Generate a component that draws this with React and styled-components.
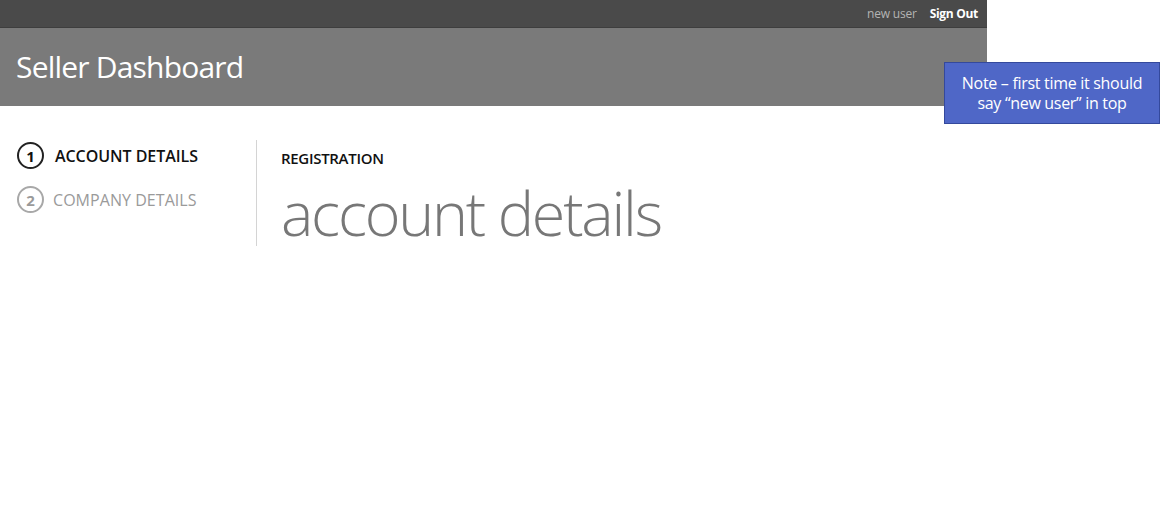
import React from "react";
import styled, { createGlobalStyle } from "styled-components";

const Global = createGlobalStyle`
  html, body { margin: 0; padding: 0; background: #fff; }
  body { font-family: "Open Sans", "Noto Sans", sans-serif; }
`;

const Page = styled.div`
  position: relative;
  width: 1165px;
  height: 516px;
`;

const Header = styled.header`
  width: 987px;
`;

const TopBar = styled.div`
  height: 28px;
  background: #4a4a4a;
  display: flex;
  justify-content: flex-end;
  align-items: center;
  gap: 13px;
  padding-right: 9px;
  box-sizing: border-box;
  border-bottom: 1px solid #3e3e3e;
`;

const UserName = styled.span`
  font-size: 12px;
  color: #b4b4b4;
  letter-spacing: -0.2px;
`;

const SignOut = styled.a`
  font-size: 12px;
  font-weight: 700;
  color: #fff;
  letter-spacing: -0.3px;
  cursor: pointer;
`;

const TitleBar = styled.div`
  height: 78px;
  background: #7a7a7a;
  display: flex;
  align-items: center;
  padding-left: 16px;
  padding-bottom: 2px;
  box-sizing: border-box;
`;

const Title = styled.h1`
  margin: 0;
  font-size: 30px;
  font-weight: 400;
  color: #fff;
  letter-spacing: -0.8px;
`;

const Main = styled.div`
  display: flex;
  padding-top: 34px;
`;

const Steps = styled.ol`
  list-style: none;
  margin: 0;
  padding: 2px 0 0 17px;
  width: 257px;
  box-sizing: border-box;
  border-right: 1px solid #d4d4d4;
  height: 106px;
  display: flex;
  flex-direction: column;
  gap: 17px;
`;

const Step = styled.li`
  display: flex;
  align-items: center;
  gap: ${(p) => (p.$active ? "11px" : "9px")};
  color: ${(p) => (p.$active ? "#111" : "#9a9a9a")};
  font-size: 16px;
  font-weight: ${(p) => (p.$active ? 600 : 400)};
  letter-spacing: ${(p) => (p.$active ? "-0.05px" : "0.05px")};
`;

const Circle = styled.span`
  width: 23px;
  height: 23px;
  border-radius: 50%;
  border: 2px solid ${(p) => (p.$active ? "#222" : "#a8a8a8")};
  display: flex;
  align-items: center;
  justify-content: center;
  font-size: 15px;
  font-weight: 700;
  letter-spacing: 0;
  color: ${(p) => (p.$active ? "#111" : "#9a9a9a")};
  flex-shrink: 0;
`;

const Content = styled.section`
  padding: 8px 0 0 24px;
`;

const Kicker = styled.div`
  font-size: 15px;
  line-height: 20px;
  font-weight: 600;
  color: #111;
  letter-spacing: -0.3px;
`;

const Heading = styled.h2`
  margin: 14px 0 0;
  font-size: 61px;
  line-height: 61px;
  font-weight: 300;
  color: #777;
  letter-spacing: -2.2px;
`;

const Note = styled.div`
  position: absolute;
  left: 944px;
  top: 62px;
  width: 216px;
  height: 62px;
  box-sizing: border-box;
  background: #4f67c7;
  border: 1px solid #34499c;
  color: #fff;
  font-size: 16px;
  line-height: 20px;
  text-align: center;
  display: flex;
  align-items: center;
  justify-content: center;
  letter-spacing: -0.3px;
`;

export default function App() {
  return (
    <Page>
      <Global />
      <Header>
        <TopBar>
          <UserName>new user</UserName>
          <SignOut>Sign Out</SignOut>
        </TopBar>
        <TitleBar>
          <Title>Seller Dashboard</Title>
        </TitleBar>
      </Header>
      <Main>
        <Steps>
          <Step $active>
            <Circle $active>1</Circle>
            ACCOUNT DETAILS
          </Step>
          <Step>
            <Circle>2</Circle>
            COMPANY DETAILS
          </Step>
        </Steps>
        <Content>
          <Kicker>REGISTRATION</Kicker>
          <Heading>account details</Heading>
        </Content>
      </Main>
      <Note>
        Note – first time it should
        <br />
        say “new user” in top
      </Note>
    </Page>
  );
}
